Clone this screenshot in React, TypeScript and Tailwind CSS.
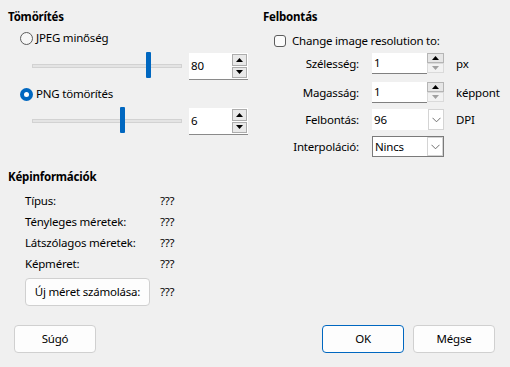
import React from "react";

const font = { fontFamily: '"Segoe UI", "Noto Sans", "Open Sans", sans-serif' };

function Chevron({ color = "#606060" }: { color?: string }) {
  return (
    <svg width="9" height="6" viewBox="0 0 9 6">
      <polyline points="0.5,0.8 4.5,4.8 8.5,0.8" fill="none" stroke={color} strokeWidth="0.9" />
    </svg>
  );
}

function Tri({ up, color = "#000" }: { up?: boolean; color?: string }) {
  return (
    <svg width="7" height="4" viewBox="0 0 7 4">
      {up ? <polygon points="0,4 7,4 3.5,0" fill={color} /> : <polygon points="0,0 7,0 3.5,4" fill={color} />}
    </svg>
  );
}

// nagy spin mező a bal oldalon
function BigSpin({ value }: { value: string }) {
  return (
    <div className="w-[59px] h-[27px] bg-white border-b border-[#8a8a8a] flex">
      <div className="flex-1 flex items-center pl-[2px]">{value}</div>
      <div className="w-[16px] flex flex-col gap-[1px] py-[1px] pr-[1px]">
        <div className="h-[12px] border border-[#adadad] bg-[#e9e9e9] flex items-center justify-center">
          <Tri up />
        </div>
        <div className="h-[12px] border border-[#adadad] bg-[#e9e9e9] flex items-center justify-center">
          <Tri />
        </div>
      </div>
    </div>
  );
}

function SmallSpin({ value }: { value: string }) {
  return (
    <div className="w-[72px] h-[21px] flex bg-white">
      <div className="flex-1 flex items-center pl-[2px] border-b border-[#808080]">{value}</div>
      <div className="w-[17px] flex flex-col bg-[#f0f0f0]">
        <div className="h-[10px] border border-[#b5b5b5] bg-[#e6e6e6] flex items-center justify-center">
          <Tri up />
        </div>
        <div className="h-[10px] border border-[#dadada] bg-[#f2f2f2] flex items-center justify-center">
          <Tri color="#a0a0a0" />
        </div>
      </div>
    </div>
  );
}

function Combo({ value, bordered }: { value: string; bordered?: boolean }) {
  return (
    <div
      className={
        bordered
          ? "w-[72px] h-[21px] flex bg-white border border-[#7a7a7a]"
          : "w-[72px] h-[21px] flex bg-white"
      }
    >
      <div className="flex-1 flex items-center pl-[2px]">{value}</div>
      <div className="w-[16px] border border-[#d4d4d4] bg-white flex items-center justify-center">
        <Chevron />
      </div>
    </div>
  );
}

function Slider({ left }: { left: string }) {
  return (
    <div className="relative w-[150px] h-full">
      <div className="absolute left-0 right-0 top-[11px] h-[4px] bg-[#e4e4e4] border border-[#d2d2d2]" />
      <div className={`absolute top-[-1px] w-[5px] h-[26px] bg-[#0067c0] rounded-[1px] ${left}`} />
    </div>
  );
}

function Radio({ checked }: { checked?: boolean }) {
  return checked ? (
    <div className="w-[13px] h-[13px] rounded-full bg-[#0067c0] flex items-center justify-center">
      <div className="w-[5px] h-[5px] rounded-full bg-white" />
    </div>
  ) : (
    <div className="w-[13px] h-[13px] rounded-full border border-[#5c5c5c] bg-[#f6f6f6]" />
  );
}

function Button({ label, primary, w = "w-[82px]" }: { label: string; primary?: boolean; w?: string }) {
  return (
    <div
      className={`${w} h-[28px] rounded-[4px] flex items-center justify-center bg-[#fdfdfd] border ${
        primary ? "border-[#0067c0]" : "border-[#d0d0d0]"
      }`}
    >
      {label}
    </div>
  );
}

const infoRows = ["Típus:", "Tényleges méretek:", "Látszólagos méretek:", "Képméret:"];

export default function App() {
  return (
    <div
      className="w-[510px] h-[367px] bg-[#f0f0f0] text-[#000] text-[11.5px] tracking-[-0.2px] flex flex-col"
      style={font}
    >
      <div className="flex items-start">
        {/* Tömörítés + Képinformációk */}
        <div className="w-[263px] pl-[8px] pt-[9px] flex flex-col">
          <div className="h-[16px] leading-[16px] font-bold">Tömörítés</div>
          <div className="h-[16px] mt-[5px] ml-[12px] flex items-center gap-[3px]">
            <Radio />
            <span>JPEG minőség</span>
          </div>
          <div className="h-[27px] mt-[7px] ml-[24px] flex gap-[7px]">
            <Slider left="left-[114px]" />
            <BigSpin value="80" />
          </div>
          <div className="h-[16px] mt-[6px] ml-[12px] flex items-center gap-[3px]">
            <Radio checked />
            <span>PNG tömörítés</span>
          </div>
          <div className="h-[27px] mt-[6px] ml-[24px] flex gap-[7px]">
            <Slider left="left-[88px]" />
            <BigSpin value="6" />
          </div>

          <div className="h-[16px] leading-[16px] mt-[34px] font-bold">Képinformációk</div>
          <div className="mt-[5px] ml-[17px] flex flex-col">
            {infoRows.map((r) => (
              <div key={r} className="h-[21px] flex items-center">
                <span className="w-[135px]">{r}</span>
                <span>???</span>
              </div>
            ))}
            <div className="h-[28px] mt-[4px] flex items-center gap-[10px]">
              <Button label="Új méret számolása:" w="w-[125px]" />
              <span>???</span>
            </div>
          </div>
        </div>

        {/* Felbontás */}
        <div className="flex-1 pt-[9px] flex flex-col">
          <div className="h-[16px] leading-[16px] font-bold">Felbontás</div>
          <div className="h-[16px] mt-[8px] ml-[11px] flex items-center gap-[6px]">
            <div className="w-[12px] h-[12px] rounded-[3px] border border-[#5c5c5c] bg-[#fbfbfb]" />
            <span>Change image resolution to:</span>
          </div>
          <div className="h-[21px] mt-[4px] flex items-center">
            <span className="w-[96px] text-right">Szélesség:</span>
            <div className="ml-[13px]">
              <SmallSpin value="1" />
            </div>
            <span className="ml-[12px]">px</span>
          </div>
          <div className="h-[21px] mt-[8px] flex items-center">
            <span className="w-[96px] text-right">Magasság:</span>
            <div className="ml-[13px]">
              <SmallSpin value="1" />
            </div>
            <span className="ml-[12px]">képpont</span>
          </div>
          <div className="h-[21px] mt-[6px] flex items-center">
            <span className="w-[96px] text-right">Felbontás:</span>
            <div className="ml-[13px]">
              <Combo value="96" />
            </div>
            <span className="ml-[12px]">DPI</span>
          </div>
          <div className="h-[21px] mt-[6px] flex items-center">
            <span className="w-[96px] text-right">Interpoláció:</span>
            <div className="ml-[13px]">
              <Combo value="Nincs" bordered />
            </div>
          </div>
        </div>
      </div>

      <div className="mt-[19px] px-[14px] flex justify-between">
        <Button label="Súgó" />
        <div className="flex gap-[9px] pr-[1px]">
          <Button label="OK" primary />
          <Button label="Mégse" />
        </div>
      </div>
    </div>
  );
}
